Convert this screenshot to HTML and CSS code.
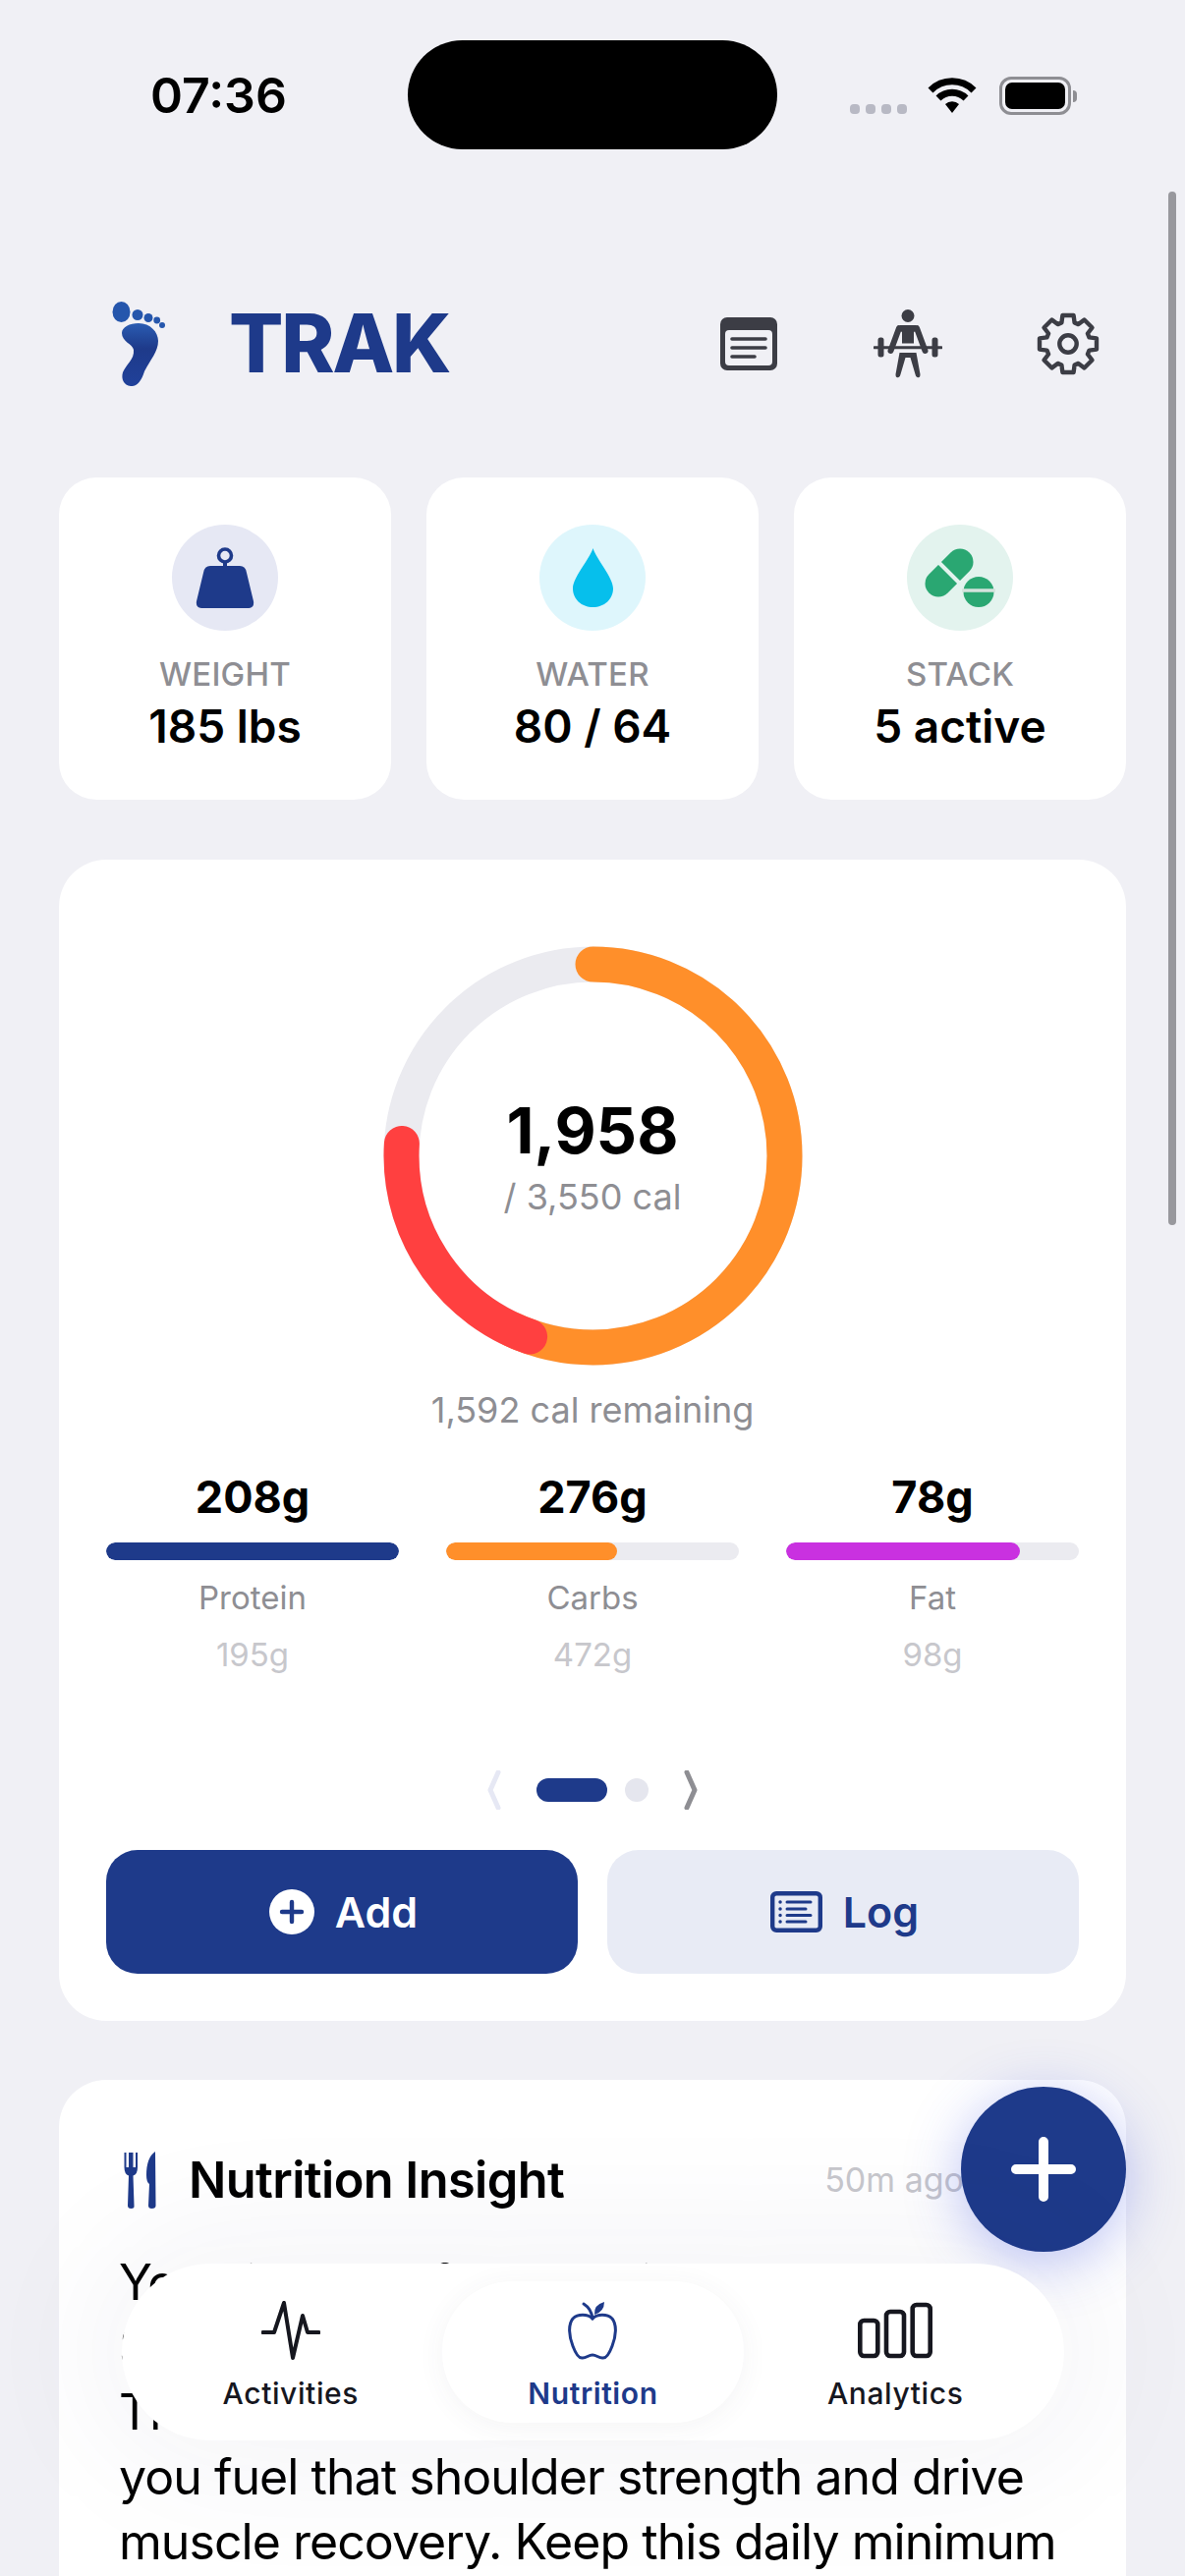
FILE: index.html
```html
<!DOCTYPE html>
<html lang="en">
<head>
<meta charset="utf-8">
<title>TRAK</title>
<link rel="stylesheet" href="styles.css">
</head>
<body>
<div class="screen">
  <div class="status">
    <span class="time">07:36</span>
    <div class="status-right">
      <div class="signal"><i></i><i></i><i></i><i></i></div>
      <svg class="wifi" viewBox="0 0 50 36" width="50" height="36">
        <path d="M3 13 A31 31 0 0 1 47 13" class="wifi-arc"/>
        <path d="M11 21 A20 20 0 0 1 39 21" class="wifi-arc"/>
        <path d="M18 27 L25 36 L32 27 A10 10 0 0 0 18 27Z" class="wifi-dot"/>
      </svg>
      <div class="battery"><div class="battery-fill"></div></div>
      <div class="battery-cap"></div>
    </div>
  </div>
  <div class="island"></div>
  <div class="scrollbar"></div>

  <header class="header">
    <div class="brand">
      <svg class="foot" viewBox="20 12 60 92" width="60" height="92">
        <defs><linearGradient id="footg" x1="0" y1="0" x2="0" y2="1"><stop offset="0" stop-color="#2a5cb2"/><stop offset=".4" stop-color="#1e3a8a"/><stop offset="1" stop-color="#20419a"/></linearGradient></defs>
        <ellipse cx="32.5" cy="25.5" rx="9" ry="10.5" fill="#2556ac"/>
        <circle cx="49" cy="28.5" r="5.5" fill="#2556ac"/>
        <circle cx="60" cy="31.5" r="4.5" fill="#2556ac"/>
        <circle cx="68.7" cy="34" r="3.4" fill="#2556ac"/>
        <circle cx="74" cy="39" r="3" fill="#2556ac"/>
        <path d="M50 37 C62 37 70 46 70 55 C70 66 62 74 56 86 C53 96 48 102 42 101 C35 100 32 94 34 87 C37 79 46 74 45 64 C44 58 33 56 33 47 C33 41 41 37 50 37Z" fill="url(#footg)"/>
      </svg>
      <span class="brand-name">TRAK</span>
    </div>
    <div class="header-icons">
      <svg viewBox="0 0 58 54" width="58" height="54">
        <rect width="58" height="54" rx="7" fill="#3c3d45"/>
        <rect x="5" y="13" width="48" height="36" rx="4" fill="#f0f0f5"/>
        <path d="M12 22H46M12 31H46M12 40H35" stroke="#3c3d45" stroke-width="3.6" stroke-linecap="round" fill="none"/>
      </svg>
      <svg viewBox="0 0 70 71" width="70" height="71">
        <circle cx="35" cy="6.5" r="6.5" fill="#3c3d45"/>
        <path d="M27 16 H43 L46 20 L41 23 V34.5 H29 V23 L24 20Z" fill="#3c3d45"/>
        <path d="M26 19 L17.5 42 M44 19 L52.5 42" stroke="#3c3d45" stroke-width="6" stroke-linecap="round" fill="none"/>
        <path d="M1 38.7 H69" stroke="#3c3d45" stroke-width="3" stroke-linecap="round"/>
        <rect x="4.5" y="28.5" width="6" height="20" rx="2.5" fill="#3c3d45"/>
        <rect x="59.5" y="28.5" width="6" height="20" rx="2.5" fill="#3c3d45"/>
        <path d="M26.5 44 H43.5 L47.5 66 Q47.5 70 44.5 69 Q43 69 42.5 66 L37.5 49 H32.5 L27.5 66 Q27 69 25.5 69 Q22.5 70 22.5 66Z" fill="#3c3d45"/>
      </svg>
      <svg class="gear-icon" viewBox="-32 -32 64 64" width="64" height="64">
        <polygon class="gear" points="-6.6,-21.5 -5.6,-29 5.6,-29 6.6,-21.5 10.5,-19.9 16.5,-24.5 24.5,-16.5 19.9,-10.5 21.5,-6.6 29,-5.6 29,5.6 21.5,6.6 19.9,10.5 24.5,16.5 16.5,24.5 10.5,19.9 6.6,21.5 5.6,29 -5.6,29 -6.6,21.5 -10.5,19.9 -16.5,24.5 -24.5,16.5 -19.9,10.5 -21.5,6.6 -29,5.6 -29,-5.6 -21.5,-6.6 -19.9,-10.5 -24.5,-16.5 -16.5,-24.5 -10.5,-19.9"/>
        <circle class="gear" r="8.7"/>
      </svg>
    </div>
  </header>

  <section class="stats">
    <div class="stat">
      <div class="stat-icon tint-blue">
        <svg viewBox="0 0 60 63" width="60" height="63">
          <circle cx="30" cy="8.5" r="6.5" fill="none" stroke="#1e3a8a" stroke-width="3.6"/>
          <rect x="28" y="14" width="4" height="6" fill="#1e3a8a"/>
          <path d="M15 19 H45 Q51 19 52 26 L59 55 Q60 62 54 62 H6 Q0 62 1 55 L8 26 Q9 19 15 19Z" fill="#1e3a8a"/>
        </svg>
      </div>
      <div class="stat-label">WEIGHT</div>
      <div class="stat-value">185 lbs</div>
    </div>
    <div class="stat">
      <div class="stat-icon tint-cyan">
        <svg viewBox="0 0 41 60" width="41" height="60">
          <path d="M20.5 0 C24 11 41 30 41 41 C41 52 32 60 20.5 60 C9 60 0 52 0 41 C0 30 17 11 20.5 0Z" fill="#06bfec"/>
        </svg>
      </div>
      <div class="stat-label">WATER</div>
      <div class="stat-value">80 / 64</div>
    </div>
    <div class="stat">
      <div class="stat-icon tint-green">
        <svg viewBox="0 0 72 62" width="72" height="62">
          <path d="M36 15 L14 37" stroke="#2aa772" stroke-width="27" stroke-linecap="round"/>
          <path d="M12 13 L38 39" stroke="#e3f3ee" stroke-width="4"/>
          <circle cx="55" cy="45.5" r="15.5" fill="#2aa772"/>
          <path d="M38 44 H72" stroke="#d4e3dd" stroke-width="3.4"/>
        </svg>
      </div>
      <div class="stat-label">STACK</div>
      <div class="stat-value">5 active</div>
    </div>
  </section>

  <section class="card summary">
    <div class="ring">
      <svg viewBox="0 0 427 427" width="427" height="427">
        <g class="ring-g">
          <circle class="ring-track" cx="213.5" cy="213.5" r="195" pathLength="360"/>
          <circle class="ring-orange" cx="213.5" cy="213.5" r="195" pathLength="360"/>
          <circle class="ring-red" cx="213.5" cy="213.5" r="195" pathLength="360"/>
        </g>
      </svg>
      <div class="ring-center">
        <div class="ring-num">1,958</div>
        <div class="ring-goal">/ 3,550 cal</div>
      </div>
    </div>
    <div class="remaining">1,592 cal remaining</div>

    <div class="macros">
      <div class="macro">
        <div class="macro-val">208g</div>
        <div class="bar"><div class="bar-fill fill-navy" style="width:100%"></div></div>
        <div class="macro-name">Protein</div>
        <div class="macro-goal">195g</div>
      </div>
      <div class="macro">
        <div class="macro-val">276g</div>
        <div class="bar"><div class="bar-fill fill-orange" style="width:58.4%"></div></div>
        <div class="macro-name">Carbs</div>
        <div class="macro-goal">472g</div>
      </div>
      <div class="macro">
        <div class="macro-val">78g</div>
        <div class="bar"><div class="bar-fill fill-magenta" style="width:79.7%"></div></div>
        <div class="macro-name">Fat</div>
        <div class="macro-goal">98g</div>
      </div>
    </div>

    <div class="pager">
      <svg viewBox="0 0 14 40" width="14" height="40"><path d="M11 2 L3 20 L11 38" class="chev chev-off"/></svg>
      <div class="pager-dots"><span class="pill"></span><span class="dot"></span></div>
      <svg viewBox="0 0 14 40" width="14" height="40"><path d="M3 2 L11 20 L3 38" class="chev chev-on"/></svg>
    </div>

    <div class="actions">
      <button class="btn btn-add">
        <svg viewBox="0 0 46 46" width="46" height="46"><circle cx="23" cy="23" r="23" fill="#fff"/><path d="M23 13V33M13 23H33" stroke="#1e3a8a" stroke-width="4.4" stroke-linecap="round"/></svg>
        <span>Add</span>
      </button>
      <button class="btn btn-log">
        <svg viewBox="0 0 53 42" width="53" height="42">
          <rect x="2.2" y="2.2" width="48.6" height="37.6" rx="4" fill="none" stroke="#1e3a8a" stroke-width="4.4"/>
          <path d="M17 11H41M17 18H36M17 24.500H41M17 31H36" stroke="#1e3a8a" stroke-width="3" stroke-linecap="round"/>
          <path d="M10 11h.1M10 18h.1M10 24.500h.1M10 31h.1" stroke="#1e3a8a" stroke-width="3.400" stroke-linecap="round"/>
        </svg>
        <span>Log</span>
      </button>
    </div>
  </section>

  <section class="card insight">
    <div class="insight-head">
      <svg viewBox="0 0 35 58" width="35" height="58">
        <path d="M1.500 1V16Q1.500 23 6 24.500L5 55Q5 58 8.500 58Q12 58 11.500 55L10.500 24.500Q15 23 15 16V1H13V16H10.500V1H8.500H6V16H3.500V1Z" fill="#1e3a8a"/>
        <path d="M33 0Q24 6 24 24Q24 31 27 33L26 55Q26 58 29.500 58Q33.500 58 33.500 55Z" fill="#1e3a8a"/>
      </svg>
      <h2 class="insight-title">Nutrition Insight</h2>
      <span class="insight-time">50m ago</span>
    </div>
    <p class="insight-text">You hit 95% of your weight target.<br>Solid work today, well above<br>That minimum is how<br>you fuel that shoulder strength and drive<br>muscle recovery. Keep this daily minimum</p>
  </section>

  <button class="fab" aria-label="Add">
    <svg viewBox="0 0 66 66" width="66" height="66"><path d="M33 5V61M5 33H61" stroke="#fff" stroke-width="10" stroke-linecap="round"/></svg>
  </button>

  <nav class="tabbar">
    <div class="tab">
      <svg viewBox="0 0 60 60" width="60" height="60"><path d="M1.500 32H13L23 2L32 58L42 15L47 32H58.500" class="tab-stroke"/></svg>
      <span>Activities</span>
    </div>
    <div class="tab tab-active">
      <svg viewBox="0 0 50 60" width="50" height="60">
        <path d="M25 18C20 13 10 13 5 18C0 24 1 36 5 46C8 54 11 59 15 58C19 58 21 55 25 55C29 55 31 58 35 58C39 59 42 54 45 46C49 36 50 24 45 18C40 13 30 13 25 18Z" fill="none" stroke="#1e3a8a" stroke-width="3"/>
        <path d="M25 18Q24 8 16 3" fill="none" stroke="#1e3a8a" stroke-width="3" stroke-linecap="round"/>
        <path d="M27 14Q26 4 37 1Q37 11 27 14Z" fill="#1e3a8a"/>
      </svg>
      <span>Nutrition</span>
    </div>
    <div class="tab">
      <svg viewBox="0 0 76 56" width="76" height="56">
        <rect x="2.300" y="18" width="18" height="36" rx="4" class="tab-bar"/>
        <rect x="29" y="9" width="18" height="45" rx="4" class="tab-bar"/>
        <rect x="55.700" y="2" width="18" height="52" rx="4" class="tab-bar"/>
      </svg>
      <span>Analytics</span>
    </div>
  </nav>
</div>
</body>
</html>
```

FILE: styles.css
```css
* { box-sizing: border-box; }
html, body { margin: 0; padding: 0; }
body { background: #f0f0f5; font-family: Inter, "Liberation Sans", sans-serif; color: #000; }

.screen { position: relative; width: 1206px; height: 2622px; overflow: hidden; background: #f0f0f5; }

/* status bar */
.status { height: 280px; padding: 71px 110px 0 153px; display: flex; justify-content: space-between; align-items: flex-start; }
.time { font-size: 50px; line-height: 52px; font-weight: 600; }
.status-right { display: flex; align-items: flex-start; padding-top: 8px; }
.signal { display: flex; gap: 6px; margin-top: 27px; margin-right: 21px; }
.signal i { width: 10px; height: 10px; border-radius: 4px; background: #b8b9c4; }
.wifi { margin-right: 23px; }
.wifi-arc { fill: none; stroke: #000; stroke-width: 7; }
.wifi-dot { fill: #000; }
.battery { width: 73px; height: 39px; margin-top: -1px; border: 3px solid #8e8e93; border-radius: 12px; padding: 3px; }
.battery-fill { width: 100%; height: 100%; background: #000; border-radius: 7px; }
.battery-cap { width: 4px; height: 12px; margin: 13px 0 0 2px; background: #8e8e93; border-radius: 0 4px 4px 0; }

.island { position: absolute; left: 415px; top: 41px; width: 376px; height: 111px; border-radius: 56px; background: #000; }
.scrollbar { position: absolute; left: 1189px; top: 195px; width: 8px; height: 1052px; border-radius: 4px; background: #98989d; }

/* header */
.header { height: 140px; padding: 0 87px 0 111px; display: flex; justify-content: space-between; align-items: center; }
.brand { display: flex; align-items: center; gap: 62px; }
.foot { display: block; }
.brand-name { font-size: 82px; line-height: 82px; font-weight: 800; color: #1e3a8a; letter-spacing: -2.3px; }
.header-icons { display: flex; align-items: center; gap: 98px; }
.header-icons svg { display: block; }
.header-icons .gear-icon { margin-left: -2px; }
.gear { fill: none; stroke: #3c3d45; stroke-width: 4.4; stroke-linejoin: round; }

/* stat cards */
.stats { margin-top: 66px; padding: 0 60px; display: grid; grid-template-columns: repeat(3, 338px); gap: 36px; }
.stat { height: 328px; padding-top: 48px; background: #fff; border-radius: 38px; display: flex; flex-direction: column; align-items: center; }
.stat-icon { width: 108px; height: 108px; border-radius: 50%; display: flex; align-items: center; justify-content: center; }
.tint-blue { background: #e6e8f4; }
.tint-cyan { background: #def6fc; }
.tint-green { background: #e3f3ee; }
.stat-label { margin-top: 24px; font-size: 33px; line-height: 40px; color: #8e8e93; font-weight: 500; letter-spacing: .2px; }
.stat-value { margin-top: 6px; font-size: 46px; line-height: 54px; font-weight: 600; }

/* cards */
.card { background: #fff; border-radius: 48px; margin: 0 60px; }
.summary { margin-top: 61px; height: 1182px; padding: 88px 48px 0; display: flex; flex-direction: column; }
.ring { display: grid; justify-items: center; align-items: center; }
.ring > * { grid-area: 1 / 1; }
.ring svg { display: block; }
.ring-g { transform: rotate(-90deg); transform-origin: 213.5px 213.5px; }
.ring circle { fill: none; stroke-width: 36; }
.ring-track { stroke: #ebebf0; }
.ring-orange { stroke: #ff8f2a; stroke-linecap: round; stroke-dasharray: 205 155; }
.ring-red { stroke: #ff4040; stroke-linecap: round; stroke-dasharray: 74.4 285.6; stroke-dashoffset: -199.3; }
.ring-center { text-align: center; margin-top: 2px; }
.ring-num { font-size: 65px; line-height: 72px; font-weight: 700; }
.ring-goal { margin-top: 9px; font-size: 36px; line-height: 44px; color: #8e8e93; }
.remaining { margin-top: 24px; text-align: center; font-size: 36px; line-height: 42px; color: #8e8e93; }

.macros { margin-top: 41px; display: grid; grid-template-columns: repeat(3, 298px); gap: 48px; }
.macro { text-align: center; }
.macro-val { font-size: 45px; line-height: 54px; font-weight: 700; }
.bar { height: 18px; margin-top: 19px; border-radius: 9px; background: #ebebf0; overflow: hidden; }
.bar-fill { height: 100%; border-radius: 9px; }
.fill-navy { background: #1e3a8a; }
.fill-orange { background: #ff8f2a; }
.fill-magenta { background: #c931e0; }
.macro-name { margin-top: 18px; font-size: 33px; line-height: 40px; color: #8e8e93; }
.macro-goal { margin-top: 18px; font-size: 33px; line-height: 40px; color: #c7c7cc; }

.pager { margin-top: 98px; display: flex; justify-content: center; align-items: center; gap: 36px; }
.pager svg { display: block; }
.chev { fill: none; stroke-width: 5; stroke-linecap: round; stroke-linejoin: round; }
.chev-off { stroke: #e6e8f4; }
.chev-on { stroke: #8e8e93; }
.pager-dots { display: flex; align-items: center; gap: 18px; }
.pill { width: 72px; height: 24px; border-radius: 12px; background: #1e3a8a; }
.dot { width: 24px; height: 24px; border-radius: 50%; background: #e5e6ee; }

.actions { margin-top: 41px; display: grid; grid-template-columns: 480px 480px; gap: 30px; }
.btn { height: 126px; border: 0; border-radius: 32px; display: flex; align-items: center; justify-content: center; gap: 21px; font-family: inherit; font-size: 43px; font-weight: 600; padding: 0 0 0 3px; }
.btn svg { display: block; }
.btn-add { background: #1e3a8a; color: #fff; }
.btn-log { background: #e8ebf5; color: #1e3a8a; }

.insight { margin-top: 60px; height: 700px; padding: 73px 61px 0; }
.insight-head { display: flex; align-items: center; padding-left: 4px; }
.insight-head svg { display: block; }
.insight-title { margin: 0 0 0 32px; font-size: 50.5px; line-height: 58px; font-weight: 600; letter-spacing: -0.6px; }
.insight-time { margin-left: auto; margin-right: 104px; font-size: 34px; line-height: 40px; color: #c7c7cc; white-space: nowrap; }
.insight-text { margin: 42px 0 0; font-size: 50px; line-height: 66px; letter-spacing: -0.95px; white-space: nowrap; color: #000; }

/* bottom overlays */
.fab { position: absolute; left: 978px; top: 2124px; width: 168px; height: 168px; border: 0; border-radius: 50%; background: #1e3a8a; padding: 0; display: flex; align-items: center; justify-content: center; box-shadow: 0 10px 56px rgba(60,80,225,.34); }
.fab svg { display: block; }

.tabbar { position: absolute; left: 124px; top: 2304px; width: 959px; height: 180px; padding: 18px; border-radius: 90px; background: #fff; display: grid; grid-template-columns: repeat(3, 1fr); box-shadow: 0 0 140px 30px rgba(30,40,90,.05); }
.tab { border-radius: 71px; display: flex; flex-direction: column; align-items: center; justify-content: flex-start; padding-top: 20px; font-size: 30px; line-height: 40px; font-weight: 500; letter-spacing: .6px; color: #16171f; }
.tab svg { display: block; height: 60px; margin-bottom: 14px; }
.tab-active { color: #1e3a8a; font-weight: 600; background: #fff; box-shadow: 0 4px 28px rgba(60,60,90,.06); }
.tab-stroke { fill: none; stroke: #16171f; stroke-width: 4; stroke-linejoin: round; stroke-linecap: round; }
.tab-bar { fill: none; stroke: #16171f; stroke-width: 4.600; }
```
